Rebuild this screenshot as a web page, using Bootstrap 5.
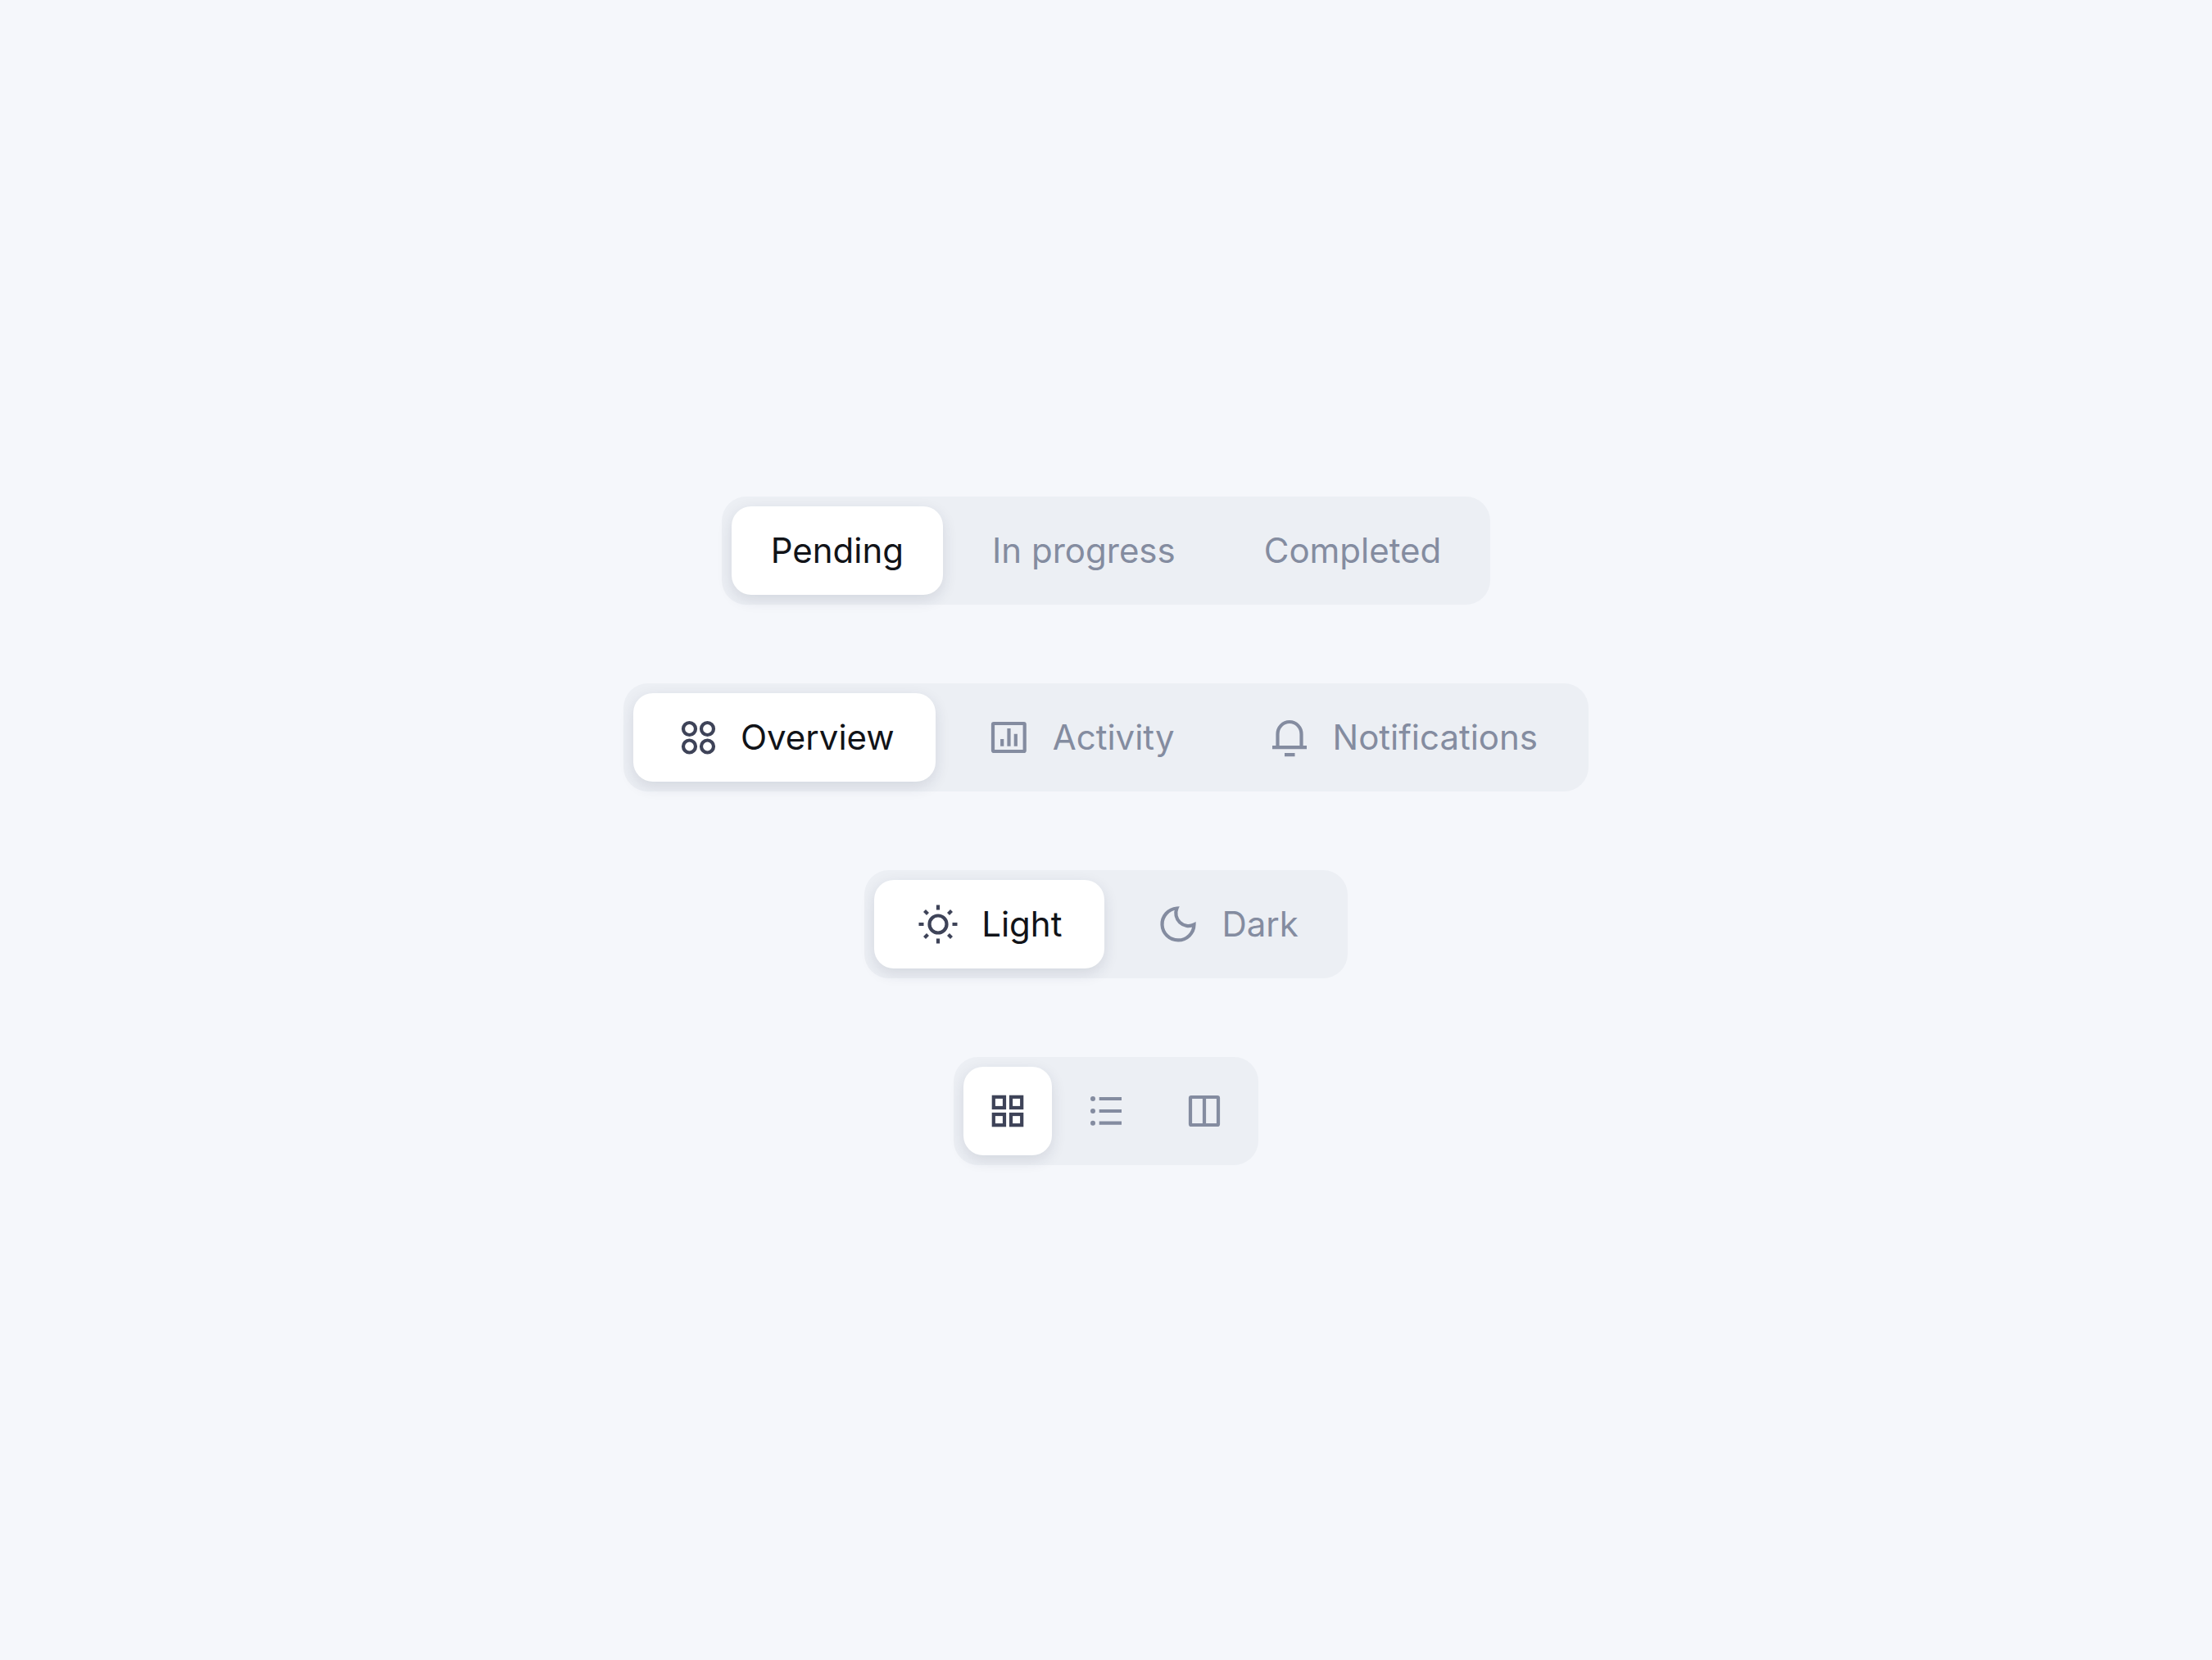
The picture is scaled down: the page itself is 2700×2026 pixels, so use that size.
<!DOCTYPE html>
<html lang="en">
<head>
    <meta charset="UTF-8">
    <meta name="viewport" content="width=device-width, initial-scale=1.0">
    <title>Segmented controls</title>
    <link href="https://cdn.jsdelivr.net/npm/bootstrap@5.3.0/dist/css/bootstrap.min.css" rel="stylesheet">
    <style>
        body { background: #f5f7fb; font-family: "Inter", "Liberation Sans", sans-serif; }
        .seg-group { background: #eceff4; padding: 12px; gap: 12px; border-radius: 30px; }
        .seg-btn {
            height: 108px; padding: 0 48px; border: 0; border-radius: 24px;
            font-size: 42px; font-weight: 400; line-height: 1; color: #848ca0;
        }
        .seg-btn:hover, .seg-btn:active { color: #848ca0; }
        .seg-btn.on, .seg-btn.on:hover {
            background: #fff; color: #111318;
            box-shadow: 0 6px 18px rgba(30, 40, 70, .12);
        }
        .seg-btn.with-icon { gap: 23px; padding-right: 50px; }
        .seg-btn.light-btn { padding-right: 52px; }
        .seg-btn.dark-btn { padding-right: 48px; }
        .seg-btn.only-icon { width: 108px; padding: 0; justify-content: center; }
        .seg-btn svg { width: 60px; height: 60px; flex: none; fill: none; stroke: #848ca0; stroke-width: 4.2; }
        .seg-btn.on svg { stroke: #3e4358; }
        .seg-stack { gap: 96px; padding-top: 2px; }
    </style>
</head>
<body>
    <div class="min-vh-100 d-flex flex-column align-items-center justify-content-center seg-stack">

        <div class="seg-group d-inline-flex">
            <button type="button" class="btn seg-btn on d-inline-flex align-items-center">Pending</button>
            <button type="button" class="btn seg-btn d-inline-flex align-items-center">In progress</button>
            <button type="button" class="btn seg-btn d-inline-flex align-items-center">Completed</button>
        </div>

        <div class="seg-group d-inline-flex">
            <button type="button" class="btn seg-btn with-icon on d-inline-flex align-items-center">
                <svg viewBox="0 0 60 60"><circle cx="20.5" cy="19.5" r="7.5"/><circle cx="42.5" cy="19.5" r="7.5"/><circle cx="20.5" cy="41" r="7.5"/><circle cx="42.5" cy="41" r="7.5"/></svg>
                Overview
            </button>
            <button type="button" class="btn seg-btn with-icon d-inline-flex align-items-center">
                <svg viewBox="0 0 60 60"><rect x="10" y="13" width="38.7" height="34" rx="1"/><path d="M21.2 32V40.7M29.5 19V40.7M37.8 25.7V40.7"/></svg>
                Activity
            </button>
            <button type="button" class="btn seg-btn with-icon d-inline-flex align-items-center">
                <svg viewBox="0 0 60 60"><path d="M15.5 42V26a14.5 15 0 0 1 29 0V42M9 42.2H51M24 51.2H36.5"/></svg>
                Notifications
            </button>
        </div>

        <div class="seg-group d-inline-flex">
            <button type="button" class="btn seg-btn with-icon light-btn on d-inline-flex align-items-center">
                <svg viewBox="0 0 60 60"><circle cx="30" cy="30" r="10.5"/><path d="M30 6.5V12.5M30 47.5V53.5M6.5 30H12.5M47.5 30H53.5M13.5 13.5L17.5 17.5M42.5 42.5L46.5 46.5M13.5 46.5L17.5 42.5M42.5 17.5L46.5 13.5"/></svg>
                Light
            </button>
            <button type="button" class="btn seg-btn with-icon dark-btn d-inline-flex align-items-center">
                <svg viewBox="0 0 60 60"><path d="M49.5 30.5A19.5 19.5 0 1 1 28.5 10.5A15.5 15.5 0 0 0 49.5 30.5Z"/></svg>
                Dark
            </button>
        </div>

        <div class="seg-group d-inline-flex">
            <button type="button" class="btn seg-btn only-icon on d-inline-flex align-items-center" aria-label="Grid">
                <svg viewBox="0 0 60 60"><rect x="12.8" y="12.8" width="13.2" height="13.2"/><rect x="34" y="12.8" width="13.2" height="13.2"/><rect x="12.8" y="34" width="13.2" height="13.2"/><rect x="34" y="34" width="13.2" height="13.2"/></svg>
            </button>
            <button type="button" class="btn seg-btn only-icon d-inline-flex align-items-center" aria-label="List">
                <svg viewBox="0 0 60 60"><path d="M21.7 15H49M21.7 30H49M21.7 44.7H49"/><circle cx="14" cy="15" r="3" fill="#848ca0" stroke="none"/><circle cx="14" cy="30" r="3" fill="#848ca0" stroke="none"/><circle cx="14" cy="44.7" r="3" fill="#848ca0" stroke="none"/></svg>
            </button>
            <button type="button" class="btn seg-btn only-icon d-inline-flex align-items-center" aria-label="Columns">
                <svg viewBox="0 0 60 60"><rect x="13" y="13" width="34" height="34" rx="1"/><path d="M30 13V47"/></svg>
            </button>
        </div>

    </div>
    <script src="https://cdn.jsdelivr.net/npm/bootstrap@5.3.0/dist/js/bootstrap.bundle.min.js"></script>
</body>
</html>
